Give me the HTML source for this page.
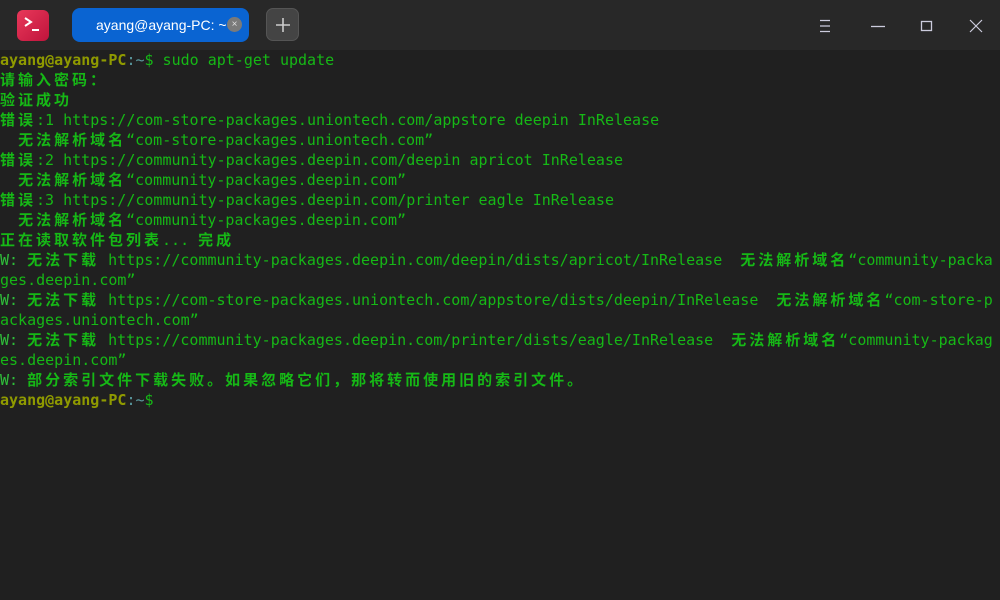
<!DOCTYPE html>
<html><head><meta charset="utf-8"><style>
html,body{margin:0;padding:0;width:1000px;height:600px;overflow:hidden;background:#202020;}
.tb{position:absolute;left:0;top:0;width:1000px;height:50px;background:#282828;}
.logo{position:absolute;left:17px;top:10px;width:32px;height:31px;border-radius:6px;background:linear-gradient(135deg,#e8385a,#c0143c);}
.tab{position:absolute;left:72px;top:8px;width:177px;height:34px;border-radius:8px;background:#0a64d2;color:#fff;font:14px "Liberation Sans",sans-serif;line-height:34px;}
.tab span{position:absolute;left:24px;}
.x{position:absolute;left:155px;top:9px;width:15px;height:15px;border-radius:50%;background:#7a7a7a;color:#ddd;font-size:10px;line-height:15px;text-align:center;}
.plus{position:absolute;left:266px;top:8px;width:33px;height:33px;border-radius:7px;background:#444;border:1px solid #555;box-sizing:border-box;}
.term{position:absolute;left:0;top:50px;font-family:"DejaVu Sans Mono","Noto Sans CJK SC",monospace;font-size:15px;line-height:20px;color:#16b816;}
.term div{height:20px;white-space:pre;}
.c{font-family:"Noto Sans CJK SC",sans-serif;letter-spacing:3px;}
.b{font-weight:bold;}
.p{color:#8f9a00;font-weight:bold;}
.g{color:#5a9aa0;}
.w{color:#2fbf3a;}
</style></head><body>
<div class="tb">
<div class="logo"><svg width="32" height="31"><path d="M8 8 L14 12 L8 16" stroke="#fff" stroke-width="2" fill="none"/><path d="M15 20 H22" stroke="#fff" stroke-width="2"/></svg></div>
<div class="tab"><span>ayang@ayang-PC: ~</span><div class="x">×</div></div>
<div class="plus"><svg width="33" height="33"><path d="M16 9 V23 M9 16 H23" stroke="#ccc" stroke-width="1.6"/></svg></div>
<svg style="position:absolute;left:815px;top:15px" width="170" height="22">
<path d="M5 5.5H15M5 11H15M5 16.5H15" stroke="#ccd" stroke-width="1.2"/>
<path d="M56 11.5H70" stroke="#ccd" stroke-width="1.3"/>
<rect x="106.5" y="6.5" width="10" height="9" fill="none" stroke="#ccd" stroke-width="1.3"/>
<path d="M155 5L167 17M167 5L155 17" stroke="#ccd" stroke-width="1.2"/>
</svg>
</div>
<div class="term"><div><span class="p">ayang@ayang-PC</span><span class="g">:~</span>$ sudo apt-get update</div><div><span class="c b">请输入密码：</span></div><div><span class="c b">验证成功</span></div><div><span class="c b">错误</span>:1 https://com-store-packages.uniontech.com/appstore deepin InRelease</div><div>  <span class="c b">无法解析域名</span>“com-store-packages.uniontech.com”</div><div><span class="c b">错误</span>:2 https://community-packages.deepin.com/deepin apricot InRelease</div><div>  <span class="c b">无法解析域名</span>“community-packages.deepin.com”</div><div><span class="c b">错误</span>:3 https://community-packages.deepin.com/printer eagle InRelease</div><div>  <span class="c b">无法解析域名</span>“community-packages.deepin.com”</div><div><span class="c b">正在读取软件包列表</span>... <span class="c b">完成</span></div><div><span class="w">W: </span><span class="c b">无法下载</span> https://community-packages.deepin.com/deepin/dists/apricot/InRelease  <span class="c b">无法解析域名</span>“community-packa</div><div>ges.deepin.com”</div><div><span class="w">W: </span><span class="c b">无法下载</span> https://com-store-packages.uniontech.com/appstore/dists/deepin/InRelease  <span class="c b">无法解析域名</span>“com-store-p</div><div>ackages.uniontech.com”</div><div><span class="w">W: </span><span class="c b">无法下载</span> https://community-packages.deepin.com/printer/dists/eagle/InRelease  <span class="c b">无法解析域名</span>“community-packag</div><div>es.deepin.com”</div><div><span class="w">W: </span><span class="c b">部分索引文件下载失败。如果忽略它们，那将转而使用旧的索引文件。</span></div><div><span class="p">ayang@ayang-PC</span><span class="g">:~</span>$</div></div>
</body></html>
